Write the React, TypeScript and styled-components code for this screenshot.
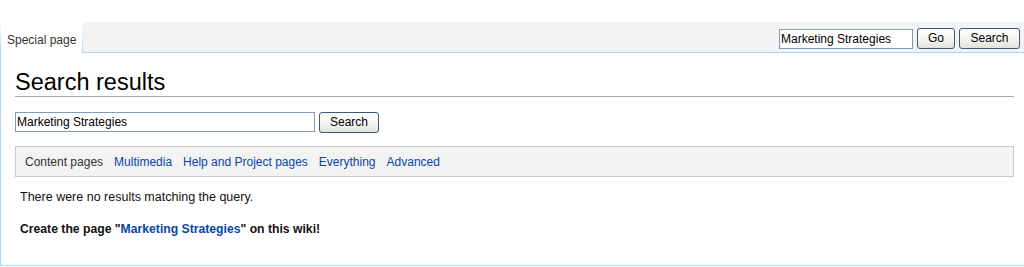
import React from "react";
import styled, { createGlobalStyle } from "styled-components";

const GlobalStyle = createGlobalStyle`
  html, body {
    margin: 0;
    padding: 0;
    background: #ffffff;
  }
  body {
    font-family: "Liberation Sans", Arial, sans-serif;
    color: #000;
  }
  * { box-sizing: border-box; }
`;

const dotted = `
  background-color: #f3f3f3;
`;

const Page = styled.div`
  padding-top: 22px;
  width: 1024px;
`;

const Header = styled.div`
  display: flex;
  height: 31px;
`;

const Tab = styled.div`
  background: #ffffff;
  border-style: solid;
  border-width: 0 1px 0 1px;
  border-image: linear-gradient(to bottom, rgba(167, 215, 249, 0) 0%, #a7d7f9 100%) 1;
  padding: 11px 6px 0 6px;
  font-size: 12px;
  line-height: 14px;
  color: #333;
  white-space: nowrap;
`;

const HeaderFill = styled.div`
  flex: 1;
  ${dotted}
  border-bottom: 1px solid #a7d7f9;
  display: flex;
  justify-content: flex-end;
  align-items: flex-start;
  padding: 6px 4px 0 0;
`;

const Form = styled.form`
  display: flex;
  align-items: flex-start;
  gap: 4px;
  margin: 0;
`;

const TextInput = styled.input<{ $w: number }>`
  width: ${(p) => p.$w}px;
  height: 20px;
  margin-top: 1px;
  border: 1px solid #7f9db9;
  padding: 0 1px;
  font-family: "Liberation Sans", Arial, sans-serif;
  font-size: 12px;
  color: #000;
  background: #fff;
  outline: none;
`;

const Button = styled.button<{ $w: number }>`
  width: ${(p) => p.$w}px;
  height: 21px;
  padding: 0;
  border: 1px solid #3f5873;
  border-radius: 3px;
  background: linear-gradient(to bottom, #ffffff 0%, #f3f3ee 60%, #e3e3db 100%);
  font-family: "Liberation Sans", Arial, sans-serif;
  font-size: 12px;
  color: #000;
  line-height: 19px;
  cursor: pointer;
`;

const Content = styled.div`
  border-left: 1px solid #a7d7f9;
  border-bottom: 1px solid #a7d7f9;
  background: #fff;
  padding: 15px 10px 28px 14px;
  height: 213px;
`;

const Heading = styled.h1`
  margin: 0;
  font-family: "Liberation Sans", Arial, sans-serif;
  font-weight: normal;
  font-size: 23.5px;
  line-height: 28px;
  color: #000;
  border-bottom: 1px solid #aaaaaa;
`;

const MainForm = styled(Form)`
  margin-top: 15px;
  & > input { margin-top: 0; }
`;

const NavBox = styled.div`
  margin-top: 13px;
  height: 31px;
  ${dotted}
  border: 1px solid #c8c8c8;
  display: flex;
  align-items: center;
  gap: 11px;
  padding: 0 9px;
  font-size: 12px;
  line-height: 14px;
`;

const Current = styled.span`
  color: #333;
`;

const NavLink = styled.a`
  color: #0645ad;
  text-decoration: none;
`;

const Message = styled.p`
  margin: 12px 0 0 5px;
  font-size: 12.5px;
  line-height: 16px;
  color: #111;
`;

const CreateLine = styled.p`
  margin: 16px 0 0 5px;
  font-size: 12.2px;
  line-height: 16px;
  font-weight: bold;
  color: #111;
`;

const BoldLink = styled.a`
  color: #0645ad;
  text-decoration: none;
`;

export default function App() {
  return (
    <>
      <GlobalStyle />
      <Page>
        <Header>
          <Tab>Special page</Tab>
          <HeaderFill>
            <Form onSubmit={(e) => e.preventDefault()}>
              <TextInput $w={134} defaultValue="Marketing Strategies" />
              <Button $w={38} type="button">Go</Button>
              <Button $w={61} type="button">Search</Button>
            </Form>
          </HeaderFill>
        </Header>
        <Content>
          <Heading>Search results</Heading>
          <MainForm onSubmit={(e) => e.preventDefault()}>
            <TextInput $w={300} defaultValue="Marketing Strategies" />
            <Button $w={60} type="button">Search</Button>
          </MainForm>
          <NavBox>
            <Current>Content pages</Current>
            <NavLink href="#">Multimedia</NavLink>
            <NavLink href="#">Help and Project pages</NavLink>
            <NavLink href="#">Everything</NavLink>
            <NavLink href="#">Advanced</NavLink>
          </NavBox>
          <Message>There were no results matching the query.</Message>
          <CreateLine>
            Create the page "<BoldLink href="#">Marketing Strategies</BoldLink>" on this wiki!
          </CreateLine>
        </Content>
      </Page>
    </>
  );
}
